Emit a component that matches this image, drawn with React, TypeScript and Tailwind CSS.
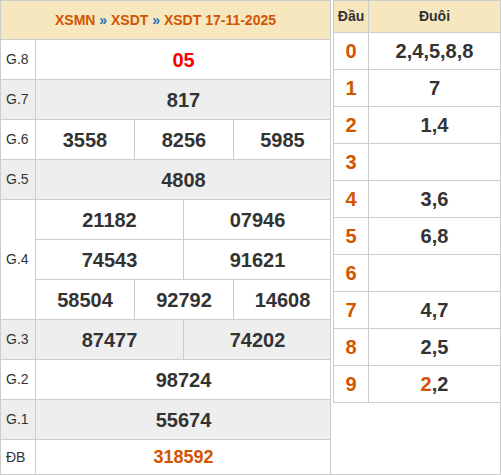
import React from "react";

const B = "border-[#cccccc]";

function Label({ t, h }: { t: string; h: string }) {
  return (
    <div className={`w-[35px] shrink-0 border-r ${B} flex items-center pl-[5px] text-[14px] text-[#333333] ${h}`}>
      {t}
    </div>
  );
}

function Cells({ vals, w, cls = "text-[#333333] text-[20px]" }: { vals: string[]; w: string[]; cls?: string }) {
  return (
    <div className="flex h-full">
      {vals.map((v, i) => (
        <div
          key={i}
          className={`${w[i]} ${i < vals.length - 1 ? `border-r ${B}` : ""} flex items-center justify-center font-bold ${cls}`}
        >
          {v}
        </div>
      ))}
    </div>
  );
}

function Row({ label, bg, children }: { label: string; bg: string; children: React.ReactNode }) {
  return (
    <div className={`flex h-[40px] border-b ${B} ${bg}`}>
      <Label t={label} h="h-[39px]" />
      <div className="flex-1 h-[39px]">{children}</div>
    </div>
  );
}

const W1 = ["w-[295px]"];
const W2 = ["w-[148px]", "w-[147px]"];
const W3 = ["w-[99px]", "w-[99px]", "w-[97px]"];

const loto: [string, React.ReactNode][] = [
  ["0", "2,4,5,8,8"],
  ["1", "7"],
  ["2", "1,4"],
  ["3", ""],
  ["4", "3,6"],
  ["5", "6,8"],
  ["6", ""],
  ["7", "4,7"],
  ["8", "2,5"],
  ["9", <><span className="text-[#d35400]">2</span>,2</>],
];

export default function App() {
  return (
    <div
      className="flex w-[501px] h-[475px] bg-white"
      style={{ fontFamily: '"Liberation Sans", Arial, sans-serif' }}
    >
      {/* Left table */}
      <div className={`w-[331px] h-[475px] shrink-0 border ${B}`}>
        <div className={`h-[39px] border-b ${B} bg-[#f6e7be] flex items-center justify-center font-bold text-[14px] text-[#d35400]`}>
          XSMN&nbsp;<span className="text-[#1e70c1]">»</span>&nbsp;XSDT&nbsp;<span className="text-[#1e70c1]">»</span>&nbsp;XSDT 17-11-2025
        </div>
        <Row label="G.8" bg="bg-white">
          <Cells vals={["05"]} w={W1} cls="text-[#ff0000] text-[20px]" />
        </Row>
        <Row label="G.7" bg="bg-[#eeeeee]">
          <Cells vals={["817"]} w={W1} />
        </Row>
        <Row label="G.6" bg="bg-white">
          <Cells vals={["3558", "8256", "5985"]} w={W3} />
        </Row>
        <Row label="G.5" bg="bg-[#eeeeee]">
          <Cells vals={["4808"]} w={W1} />
        </Row>
        <div className={`flex h-[120px] border-b ${B} bg-white`}>
          <Label t="G.4" h="h-[119px]" />
          <div className="flex-1 flex flex-col">
            <div className={`h-[40px] border-b ${B}`}>
              <div className="h-[39px]"><Cells vals={["21182", "07946"]} w={W2} /></div>
            </div>
            <div className={`h-[40px] border-b ${B}`}>
              <div className="h-[39px]"><Cells vals={["74543", "91621"]} w={W2} /></div>
            </div>
            <div className="h-[39px]">
              <Cells vals={["58504", "92792", "14608"]} w={W3} />
            </div>
          </div>
        </div>
        <Row label="G.3" bg="bg-[#eeeeee]">
          <Cells vals={["87477", "74202"]} w={W2} />
        </Row>
        <Row label="G.2" bg="bg-white">
          <Cells vals={["98724"]} w={W1} />
        </Row>
        <Row label="G.1" bg="bg-[#eeeeee]">
          <Cells vals={["55674"]} w={W1} />
        </Row>
        <div className="flex h-[34px] bg-white">
          <Label t="ĐB" h="h-[34px]" />
          <div className="flex-1 h-[34px]">
            <Cells vals={["318592"]} w={W1} cls="text-[#d35400] text-[18px]" />
          </div>
        </div>
      </div>

      {/* Right panel */}
      <div className={`flex-1 h-[475px] border-r border-b ${B} pl-[2px]`}>
        <div className={`border-l border-t ${B}`}>
          <div className={`flex h-[32px] border-b ${B} bg-[#f6e7be] font-bold text-[14px] text-[#333333]`}>
            <div className={`w-[35px] border-r ${B} flex items-center justify-center`}>Đầu</div>
            <div className="flex-1 flex items-center justify-center">Đuôi</div>
          </div>
          {loto.map(([d, v]) => (
            <div key={d} className={`flex h-[37px] border-b ${B} font-bold text-[20px]`}>
              <div className={`w-[35px] border-r ${B} flex items-center justify-center text-[#d35400]`}>{d}</div>
              <div className="flex-1 flex items-center justify-center text-[#333333]">{v}</div>
            </div>
          ))}
        </div>
      </div>
    </div>
  );
}
